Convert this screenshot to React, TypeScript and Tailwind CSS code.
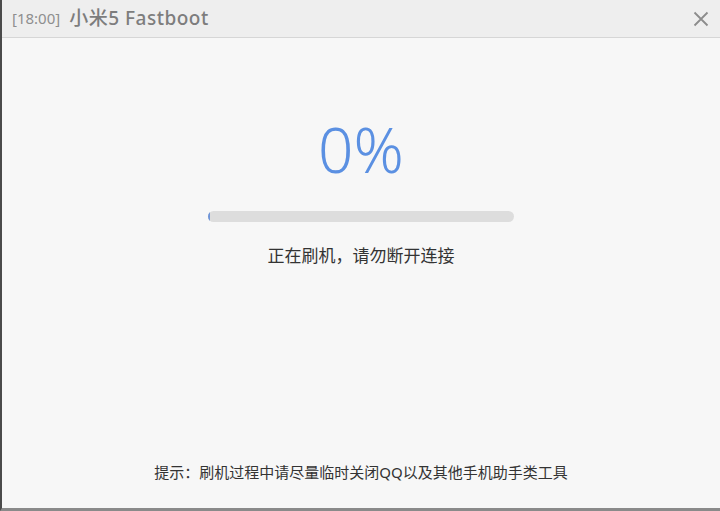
import React from "react";

const cjk = { fontFamily: '"Noto Sans", "Noto Sans CJK SC", sans-serif' };

export default function App() {
  const progress = 0;

  return (
    <div
      className="flex h-[511px] w-[720px] flex-col overflow-hidden border-b-[3px] border-l-2 border-b-[#8a8a8a] border-l-[#4b4b4b] bg-[#f7f7f7]"
      style={cjk}
    >
      {/* title bar */}
      <div className="flex h-[38px] shrink-0 items-center border-b border-[#d6d6d6] bg-[#eeeeee] pl-[10px] pr-[9px]">
        <span className="text-[15px] text-[#8e8e8e]">[18:00]</span>
        <span className="ml-[9px] text-[19px] font-medium tracking-[0.5px] text-[#7d7d7d]">
          小米5 Fastboot
        </span>
        <button className="ml-auto flex h-[20px] w-[20px] items-center justify-center text-[#8c8c8c]">
          <svg width="16" height="16" viewBox="0 0 16 16">
            <path d="M1.5 1.5 L14.5 14.5 M14.5 1.5 L1.5 14.5" stroke="currentColor" strokeWidth="1.8" />
          </svg>
        </button>
      </div>

      {/* body */}
      <div className="flex flex-1 flex-col items-center">
        <div className="mt-[80px] text-[62px] font-light leading-[62px] text-[#5b90e2]">
          {progress}%
        </div>
        <div className="mt-[31px] h-[11px] w-[306px] overflow-hidden rounded-full bg-[#dddddd]">
          <div className="h-full w-[2px] rounded-full bg-[#6f95d8]" />
        </div>
        <div className="mt-[24px] text-[17px] leading-[20px] text-[#333333]">
          正在刷机，请勿断开连接
        </div>
        <div className="mt-auto mb-[26px] text-[15px] leading-[20px] text-[#333333]">
          提示：刷机过程中请尽量临时关闭QQ以及其他手机助手类工具
        </div>
      </div>
    </div>
  );
}
